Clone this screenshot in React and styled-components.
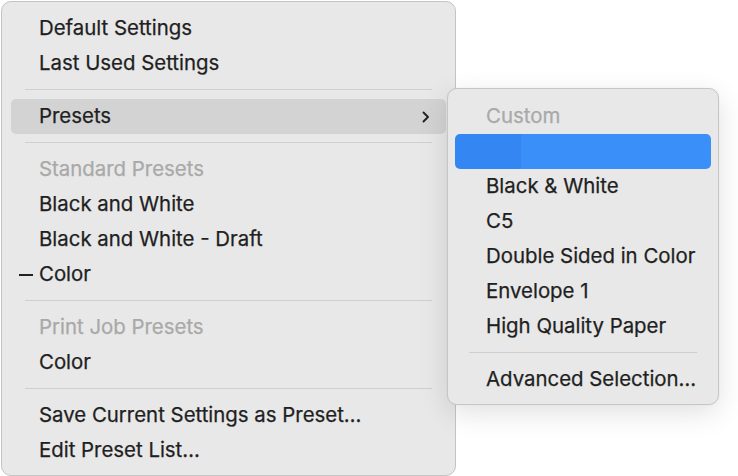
import React from 'react';
import styled, { createGlobalStyle } from 'styled-components';

const GlobalStyle = createGlobalStyle`
  html, body {
    margin: 0;
    padding: 0;
    background: #ffffff;
  }
  body {
    font-family: Inter, "Noto Sans", "Liberation Sans", sans-serif;
    -webkit-font-smoothing: antialiased;
  }
`;

const mainItems = [
  { label: 'Default Settings' },
  { label: 'Last Used Settings' },
  { sep: true },
  { label: 'Presets', submenu: true, hover: true },
  { sep: true },
  { label: 'Standard Presets', disabled: true },
  { label: 'Black and White' },
  { label: 'Black and White - Draft' },
  { label: 'Color', checked: true },
  { sep: true },
  { label: 'Print Job Presets', disabled: true },
  { label: 'Color' },
  { sep: true },
  { label: 'Save Current Settings as Preset…' },
  { label: 'Edit Preset List…' },
];

const subItems = [
  { label: 'Custom', disabled: true },
  { label: '', selected: true },
  { label: 'Black & White' },
  { label: 'C5' },
  { label: 'Double Sided in Color' },
  { label: 'Envelope 1' },
  { label: 'High Quality Paper' },
  { sep: true },
  { label: 'Advanced Selection…' },
];

function Chevron() {
  return (
    <svg width="8" height="12" viewBox="0 0 8 12">
      <path
        d="M1.5 1.5 L6 6 L1.5 10.5"
        fill="none"
        stroke="#222"
        strokeWidth="1.9"
        strokeLinecap="round"
        strokeLinejoin="round"
      />
    </svg>
  );
}

export default function App() {
  return (
    <Page>
      <GlobalStyle />
      <Menu>
        {mainItems.map((it, i) =>
          it.sep ? (
            <Separator key={i} />
          ) : (
            <Item key={i} $hover={it.hover} $disabled={it.disabled}>
              <Check>{it.checked && <Dash />}</Check>
              <Label>{it.label}</Label>
              {it.submenu && (
                <Arrow>
                  <Chevron />
                </Arrow>
              )}
            </Item>
          )
        )}
      </Menu>
      <SubMenu>
        {subItems.map((it, i) =>
          it.sep ? (
            <SubSeparator key={i} />
          ) : (
            <SubItem key={i} $disabled={it.disabled} $selected={it.selected}>
              {it.label}
            </SubItem>
          )
        )}
      </SubMenu>
    </Page>
  );
}

const Page = styled.div`
  position: relative;
  width: 738px;
  height: 476px;
  overflow: hidden;
  padding: 1px 0 0 1px;
  box-sizing: border-box;
`;

const Menu = styled.div`
  width: 455px;
  box-sizing: border-box;
  padding: 9px 9px 7px 9px;
  background: #e8e8e8;
  border: 1px solid #c4c4c4;
  border-radius: 10px;
  display: flex;
  flex-direction: column;
`;

const Item = styled.div`
  height: 35px;
  display: flex;
  align-items: center;
  border-radius: 5px;
  font-size: 20.4px;
  color: ${(p) => (p.$disabled ? '#a9a9a9' : '#1f1f1f')};
  background: ${(p) => (p.$hover ? '#d3d3d3' : 'transparent')};
`;

const Check = styled.div`
  width: 28px;
  display: flex;
  justify-content: flex-end;
  padding-right: 6px;
  box-sizing: border-box;
`;

const Dash = styled.span`
  display: block;
  width: 14px;
  height: 2px;
  background: #222;
`;

const Label = styled.span`
  flex: 1;
  white-space: nowrap;
  margin-top: -2px;
  -webkit-text-stroke: 0.25px currentColor;
`;

const Arrow = styled.span`
  display: flex;
  align-items: center;
  padding-right: 16px;
`;

const Separator = styled.div`
  height: 1px;
  background: #cfcfcf;
  margin: 8px 14px 9px 14px;
`;

const SubMenu = styled.div`
  position: absolute;
  left: 447px;
  top: 88px;
  width: 272px;
  box-sizing: border-box;
  padding: 10px 7px 7px 7px;
  background: #e8e8e8;
  border: 1px solid #c6c6c6;
  border-radius: 10px;
  box-shadow: 0 8px 28px rgba(0, 0, 0, 0.12), 0 0 2px rgba(0, 0, 0, 0.06);
  display: flex;
  flex-direction: column;
`;

const SubItem = styled.div`
  height: 35px;
  display: flex;
  align-items: center;
  padding: 0 0 2px 31px;
  box-sizing: border-box;
  border-radius: 5px;
  font-size: 20.4px;
  white-space: nowrap;
  -webkit-text-stroke: 0.25px currentColor;
  color: ${(p) => (p.$disabled ? '#a9a9a9' : '#1f1f1f')};
  background: ${(p) =>
    p.$selected
      ? 'linear-gradient(to right, #3487f3 0 66px, #3a8ff8 66px)'
      : 'transparent'};
`;

const SubSeparator = styled.div`
  height: 1px;
  background: #cfcfcf;
  margin: 8px 14px 9px 14px;
`;
